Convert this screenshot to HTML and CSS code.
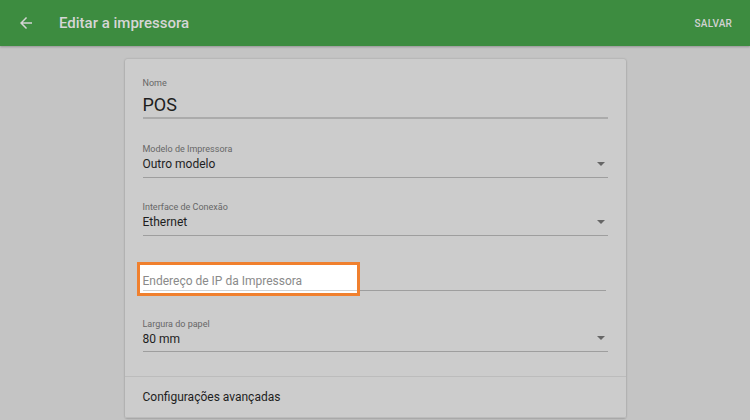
FILE: index.html
```html
<!DOCTYPE html>
<html lang="pt">
<head>
<meta charset="utf-8">
<title>Editar a impressora</title>
<link rel="stylesheet" href="styles.css">
</head>
<body>
<header class="appbar">
  <span class="back" aria-label="Voltar">
    <svg viewBox="0 0 24 24" width="18" height="18"><path fill="currentColor" d="M20 11H7.83l5.59-5.59L12 4l-8 8 8 8 1.41-1.41L7.83 13H20v-2z"/></svg>
  </span>
  <h1 class="title">Editar a impressora</h1>
  <span class="save">SALVAR</span>
</header>
<main class="page">
  <section class="card">
    <div class="form">
      <div class="field field-name">
        <div class="label">Nome</div>
        <div class="value big">POS</div>
      </div>
      <div class="field field-select">
        <div class="label">Modelo de Impressora</div>
        <div class="value">Outro modelo</div>
        <span class="caret"></span>
      </div>
      <div class="field field-select">
        <div class="label">Interface de Conexão</div>
        <div class="value">Ethernet</div>
        <span class="caret"></span>
      </div>
      <div class="field field-ip">
        <span class="highlight"></span>
        <div class="value placeholder">Endereço de IP da Impressora</div>
      </div>
      <div class="field field-select field-paper">
        <div class="label">Largura do papel</div>
        <div class="value">80 mm</div>
        <span class="caret"></span>
      </div>
    </div>
    <div class="row">Configurações avançadas</div>
  </section>
</main>
</body>
</html>
```

FILE: styles.css
```css
html, body {
  margin: 0;
  padding: 0;
  height: 100%;
}
body {
  background: #c4c4c4;
  font-family: Roboto, "Liberation Sans", sans-serif;
  color: #1e1e1e;
  overflow: hidden;
}
.appbar {
  height: 46px;
  background: #3d8c40;
  display: flex;
  align-items: center;
  padding: 0 18px 0 17px;
  box-shadow: 0 1px 2px rgba(0,0,0,0.25);
  position: relative;
  z-index: 2;
}
.back {
  width: 18px;
  height: 18px;
  color: #d4d4d4;
  display: flex;
}
.title {
  margin: 0 0 0 24px;
  font-size: 15px;
  font-weight: 500;
  color: #d6d6d6;
  flex: 1;
}
.save {
  font-size: 10px;
  font-weight: 500;
  color: #d2d2d2;
  letter-spacing: 0.2px;
}
.page {
  display: flex;
  justify-content: center;
  padding-top: 13px;
}
.card {
  width: 501px;
  background: #cccccc;
  box-shadow: 0 0 2px rgba(0,0,0,0.22), 0 1px 2px rgba(0,0,0,0.12);
  border-radius: 2px;
}
.form {
  padding: 18px 18px 24px;
}
.field {
  position: relative;
  border-bottom: 1px solid #9e9e9e;
}
.label {
  font-size: 9px;
  line-height: 12px;
  color: #676767;
}
.value {
  font-size: 12px;
  line-height: 18px;
  color: #1e1e1e;
}
.field-name {
  border-bottom: 2px solid #ababab;
}
.value.big {
  font-size: 18px;
  line-height: 24px;
  margin-top: 4px;
}
.field-select {
  margin-top: 23px;
  padding-top: 1px;
  padding-bottom: 4px;
}
.field-select + .field-select {
  margin-top: 22px;
}
.field-ip {
  margin-top: 36px;
  margin-right: 2px;
}
.field-paper {
  margin-top: 26px;
  padding-bottom: 3px;
}
.caret {
  position: absolute;
  right: 3px;
  bottom: 11px;
  width: 0;
  height: 0;
  border-left: 4px solid transparent;
  border-right: 4px solid transparent;
  border-top: 4px solid #666666;
}
.highlight {
  position: absolute;
  left: -6px;
  top: -10px;
  width: 217px;
  height: 28px;
  border: 3px solid #f0802e;
  background: #ffffff;
}
.highlight::after {
  content: "";
  position: absolute;
  left: 3px;
  right: 0;
  bottom: 2px;
  height: 1px;
  background: #d2d2d2;
}
.placeholder {
  position: relative;
  z-index: 1;
  color: #8a8a8a;
}
.row {
  border-top: 1px solid #bcbcbc;
  border-bottom: 1px solid #bcbcbc;
  height: 40px;
  display: flex;
  align-items: center;
  padding: 0 18px;
  font-size: 12px;
  color: #1e1e1e;
}
```
